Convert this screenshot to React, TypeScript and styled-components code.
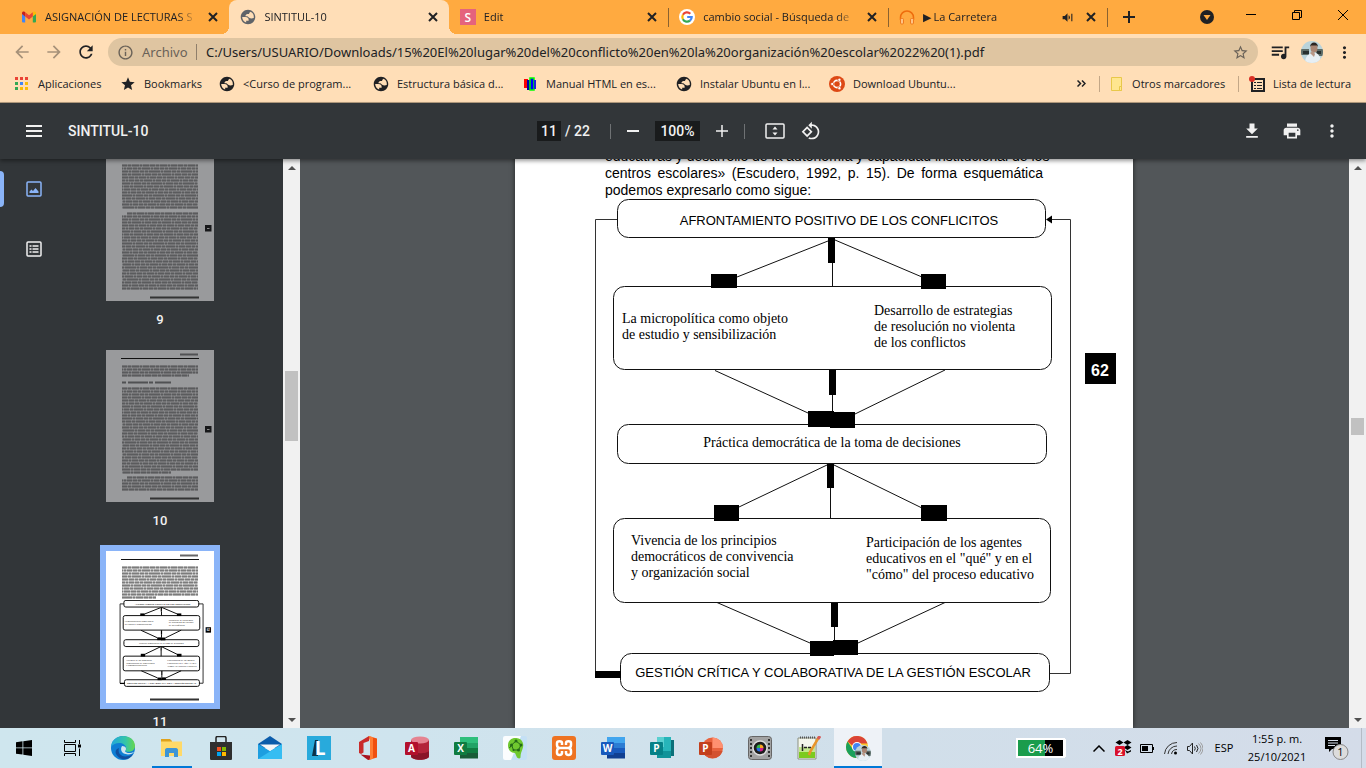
import React from 'react';
import styled, { createGlobalStyle, css } from 'styled-components';

const ui = '"Open Sans", "Noto Sans", sans-serif';
const sans = '"Liberation Sans", Arial, sans-serif';

const GlobalStyle = createGlobalStyle`
  *, *::before, *::after { box-sizing: border-box; }
  html, body, #root { height: 100%; }
  body { margin: 0; font-family: ${ui}; font-size: 11px; color: #202124; overflow: hidden; }
  button { border: 0; padding: 0; background: none; color: inherit; font: inherit; }
  input { border: 0; padding: 0; background: none; color: inherit; font: inherit; min-width: 0; }
  a { color: inherit; text-decoration: none; }
  svg { display: block; flex: none; }
`;

const Screen = styled.div`
  display: flex;
  flex-direction: column;
  height: 100vh;
`;

/* ---------- browser: tab strip ---------- */

const TitleBar = styled.header`
  display: flex;
  align-items: stretch;
  height: 34px;
  padding-left: 10px;
  background: #ffaa40;
`;

const TabStrip = styled.div`
  display: flex;
  flex: 0 1 1097px;
  min-width: 0;
`;

const Tab = styled.div<{ $active?: boolean; $divided?: boolean }>`
  position: relative;
  display: flex;
  flex: 1 1 0;
  align-items: center;
  gap: 8px;
  min-width: 0;
  padding: 0 8px 0 11px;
  ${(p) =>
    p.$divided &&
    css`
      &::after {
        content: '';
        position: absolute;
        right: -1px;
        top: 8px;
        height: 19px;
        width: 1px;
        background: #8a6230;
      }
    `}
  ${(p) =>
    p.$active &&
    css`
      background: #ffdeb7;
      border-radius: 8px 8px 0 0;
      &::before,
      &::after {
        content: '';
        position: absolute;
        bottom: 0;
        width: 8px;
        height: 8px;
      }
      &::before {
        left: -8px;
        background: radial-gradient(circle at 0 0, transparent 8px, #ffdeb7 8px);
      }
      &::after {
        right: -8px;
        background: radial-gradient(circle at 100% 0, transparent 8px, #ffdeb7 8px);
      }
    `}
`;

const TabTitle = styled.button`
  flex: 1;
  min-width: 0;
  overflow: hidden;
  white-space: nowrap;
  text-align: left;
  line-height: 16px;
  mask-image: linear-gradient(to right, #000 calc(100% - 20px), transparent);
`;

const SmallButton = styled.button`
  display: grid;
  place-items: center;
  flex: none;
  width: 16px;
  height: 16px;
`;

const NewTab = styled.button`
  display: grid;
  place-items: center;
  width: 28px;
  margin-left: 8px;
`;

const WindowControls = styled.div`
  display: flex;
  margin-left: auto;
`;

const SearchTabs = styled.button`
  display: grid;
  place-items: center;
  width: 42px;
`;

const WindowButton = styled.button`
  display: grid;
  place-items: center;
  width: 46px;
  height: 29px;
`;

const LetterIcon = styled.span`
  display: grid;
  place-items: center;
  flex: none;
  width: 16px;
  height: 16px;
  background: #e5637c;
  color: #fff;
  font: 600 12px ${ui};
`;

/* ---------- browser: toolbar and bookmarks ---------- */

const Toolbar = styled.div`
  display: flex;
  align-items: center;
  gap: 4px;
  height: 36px;
  padding: 0 8px;
  background: #ffdeb7;
`;

const ToolButton = styled.button<{ $dim?: boolean }>`
  display: grid;
  place-items: center;
  flex: none;
  width: 28px;
  height: 28px;
  color: ${(p) => (p.$dim ? '#a69179' : '#202124')};
`;

const AddressBar = styled.label`
  display: flex;
  flex: 1;
  align-items: center;
  min-width: 0;
  height: 28px;
  margin: 0 4px;
  padding: 0 9px;
  border-radius: 14px;
  background: #dfc5a1;
  color: #6a6258;
  font: 13px "Noto Sans", sans-serif;
`;

const Scheme = styled.span`
  width: 55px;
  margin-left: 8px;
  line-height: 16px;
  border-right: 1px solid #8f7f6b;
`;

const Address = styled.input`
  flex: 1;
  padding-left: 9px;
  color: #202124;
  outline: none;
`;

const BookmarkBar = styled.nav`
  display: flex;
  height: 33px;
  padding: 0 8px 5px 14px;
  background: #ffdeb7;
  border-bottom: 1px solid #b59d80;
`;

const Bookmark = styled.a<{ $width?: number }>`
  display: flex;
  align-items: center;
  gap: 8px;
  flex: none;
  width: ${(p) => (p.$width ? p.$width + 'px' : 'auto')};
  white-space: nowrap;
`;

const BookmarkEnd = styled.div`
  display: flex;
  align-items: center;
  margin-left: auto;
  padding-right: 7px;
`;

const More = styled.button`
  width: 12px;
  height: 28px;
`;

const BarRule = styled.i`
  width: 1px;
  height: 16px;
  margin: 0 10px;
  background: #c3a787;
`;

/* ---------- PDF viewer ---------- */

const PdfBar = styled.div`
  position: relative;
  z-index: 1;
  display: grid;
  grid-template-columns: 1fr 292px 1fr;
  align-items: center;
  flex: none;
  height: 56px;
  padding: 0 18px;
  background: #323639;
  color: #f1f1f1;
  font: 500 14px Roboto, sans-serif;
  box-shadow: 0 2px 4px rgba(0, 0, 0, 0.4);
`;

const BarGroup = styled.div<{ $gap: number; $end?: boolean }>`
  display: flex;
  align-items: center;
  justify-content: ${(p) => (p.$end ? 'flex-end' : 'flex-start')};
  gap: ${(p) => p.$gap}px;
`;

const ViewGroup = styled(BarGroup)`
  margin-left: 8px;
`;

const DocTitle = styled.h1`
  margin: 0;
  font: inherit;
`;

const PdfButton = styled.button`
  display: grid;
  place-items: center;
  flex: none;
  width: 32px;
  height: 32px;
`;

const PdfInput = styled.input<{ $width: number }>`
  flex: none;
  width: ${(p) => p.$width}px;
  height: 20px;
  background: #191b1c;
  text-align: center;
`;

const PageTotal = styled.span`
  flex: none;
  width: 39px;
  margin-left: -2px;
  white-space: nowrap;
`;

const PdfRule = styled.i`
  flex: none;
  width: 1px;
  height: 15px;
  background: #6f7274;
`;

const Workspace = styled.main`
  display: flex;
  flex: 1;
  min-height: 0;
`;

const Sidebar = styled.aside`
  display: flex;
  flex: 0 0 300px;
  background: #323639;
  color: #f1f1f1;
  overflow: hidden;
`;

const Rail = styled.div`
  flex: 0 0 68px;
`;

const RailButton = styled.button<{ $active?: boolean }>`
  position: relative;
  display: grid;
  place-items: center;
  width: 68px;
  height: 60px;
  color: ${(p) => (p.$active ? '#8ab4f8' : '#f1f1f1')};
  ${(p) =>
    p.$active &&
    css`
      &::before {
        content: '';
        position: absolute;
        left: 0;
        top: 12px;
        width: 4px;
        height: 36px;
        border-radius: 0 4px 4px 0;
        background: #8ab4f8;
      }
    `}
`;

const Thumbs = styled.ol`
  flex: 1;
  margin: -10px 0 0;
  padding: 0 0 0 38px;
  list-style: none;
`;

const Thumb = styled.li`
  width: 108px;
  font: 500 13px/20px Roboto, sans-serif;
  text-align: center;
`;

const Sheet = styled.div<{ $current?: boolean }>`
  display: grid;
  height: 152px;
  background: ${(p) => (p.$current ? '#fff' : '#999a9c')};
  box-shadow: ${(p) => (p.$current ? '0 0 0 6px #8ab4f8' : 'none')};
  & > svg {
    grid-area: 1 / 1;
  }
  & > svg + svg {
    margin-top: 49px;
  }
`;

const ThumbLabel = styled.div`
  padding: 9px 0 20px;
`;

const ScrollColumn = styled.div`
  display: flex;
  flex-direction: column;
  flex: 0 0 17px;
  background: #f1f1f1;
`;

const ScrollArrow = styled.button`
  display: grid;
  place-items: center;
  height: 17px;
  color: #505050;
`;

const ScrollTrack = styled.div<{ $offset: number }>`
  flex: 1;
  padding: ${(p) => p.$offset}px 2px 0;
`;

const ScrollThumb = styled.div<{ $length: number }>`
  height: ${(p) => p.$length}px;
  background: #c1c1c1;
`;

const Reader = styled.section`
  display: flex;
  flex: 1;
  justify-content: center;
  min-width: 0;
  padding-right: 1px;
  overflow: hidden;
  background: #525659;
`;

const Paper = styled.article`
  flex: 0 0 618px;
  margin-top: -11px;
  background: #fff;
  box-shadow: 0 0 5px rgba(0, 0, 0, 0.6);
`;

const BodyText = styled.p`
  width: 438px;
  margin: 0 0 0 90px;
  font: 14px/17px ${sans};
  color: #000;
`;

const BodyLine = styled.span<{ $full?: boolean }>`
  display: block;
  white-space: nowrap;
  text-align-last: ${(p) => (p.$full ? 'justify' : 'left')};
`;

/* ---------- taskbar ---------- */

const Taskbar = styled.footer`
  display: flex;
  flex: none;
  height: 40px;
  background: linear-gradient(to right, #cfe6ee 0%, #cfe4ee 30%, #d1dfea 65%, #d4dce9 100%);
  color: #000;
`;

const TaskApps = styled.div`
  display: flex;
  gap: 1px;
  margin-left: 3px;
`;

const TaskButton = styled.button<{ $state?: 'open' | 'focus' }>`
  display: grid;
  place-items: center;
  width: 48px;
  height: 40px;
  ${(p) =>
    p.$state === 'focus' &&
    css`
      background: #eef2f7;
      box-shadow: inset 0 -2px 0 #0078d7;
    `}
  ${(p) =>
    p.$state === 'open' &&
    css`
      background: linear-gradient(#0078d7, #0078d7) bottom / 40px 2px no-repeat;
    `}
`;

const Tray = styled.div`
  display: flex;
  align-items: center;
  margin-left: auto;
  padding-right: 4px;
`;

const TrayItem = styled.button<{ $width: number }>`
  display: grid;
  place-items: center;
  width: ${(p) => p.$width}px;
  height: 40px;
  line-height: 18px;
`;

const Charge = styled.div`
  display: grid;
  place-items: center;
  width: 49px;
  height: 20px;
  margin-right: 22px;
  border: 2px solid #fff;
  background: linear-gradient(to right, #1a9c4c 60%, #000 60%);
  box-shadow: 2px 0 0 -1px #fff;
  color: #fff;
  font-size: 13px;
  line-height: 16px;
`;

const ShowDesktop = styled.i`
  width: 1px;
  height: 40px;
  background: #b4bcc6;
`;

/* ---------- icons ---------- */

const Glyph = ({ d, size = 16, color = 'currentColor' }: { d: string; size?: number; color?: string }) => (
  <svg width={size} height={size} viewBox="0 0 24 24" fill={color} aria-hidden="true">
    <path d={d} />
  </svg>
);

const paths = {
  back: 'M20 11H7.83l5.59-5.59L12 4l-8 8 8 8 1.41-1.41L7.83 13H20v-2z',
  forward: 'M12 4l-1.41 1.41L16.17 11H4v2h12.17l-5.58 5.59L12 20l8-8z',
  reload:
    'M17.65 6.35C16.2 4.9 14.21 4 12 4c-4.42 0-7.99 3.58-7.99 8s3.57 8 7.99 8c3.73 0 6.84-2.55 7.73-6h-2.08c-.82 2.33-3.04 4-5.65 4-3.31 0-6-2.69-6-6s2.69-6 6-6c1.66 0 3.14.69 4.22 1.78L13 11h7V4l-2.35 2.35z',
  info: 'M11 17h2v-6h-2v6zm1-15C6.48 2 2 6.48 2 12s4.48 10 10 10 10-4.48 10-10S17.52 2 12 2zm0 18c-4.41 0-8-3.59-8-8s3.59-8 8-8 8 3.59 8 8-3.59 8-8 8zM11 9h2V7h-2v2z',
  starLine:
    'M22 9.24l-7.19-.62L12 2 9.19 8.63 2 9.24l5.46 4.73L5.82 21 12 17.27 18.18 21l-1.63-7.03L22 9.24zM12 15.4l-3.76 2.27 1-4.28-3.32-2.88 4.38-.38L12 6.1l1.71 4.04 4.38.38-3.32 2.88 1 4.28L12 15.4z',
  star: 'M12 17.27L18.18 21l-1.64-7.03L22 9.24l-7.19-.61L12 2 9.19 8.63 2 9.24l5.46 4.73L5.82 21z',
  music: 'M15 6H3v2h12V6zm0 4H3v2h12v-2zM3 16h8v-2H3v2zM17 6v8.180c-.31-.11-.65-.18-1-.18-1.660 0-3 1.340-3 3s1.340 3 3 3 3-1.340 3-3V8h3V6h-5z',
  dots: 'M12 8c1.100 0 2-.9 2-2s-.9-2-2-2-2 .9-2 2 .9 2 2 2zm0 2c-1.100 0-2 .9-2 2s.9 2 2 2 2-.9 2-2-.9-2-2-2zm0 6c-1.100 0-2 .9-2 2s.9 2 2 2 2-.9 2-2-.9-2-2-2z',
  download: 'M19 9h-4V3H9v6H5l7 7 7-7zM5 18v2h14v-2H5z',
  print:
    'M19 8H5c-1.660 0-3 1.340-3 3v6h4v4h12v-4h4v-6c0-1.660-1.340-3-3-3zm-3 11H8v-5h8v5zm3-7c-.55 0-1-.45-1-1s.45-1 1-1 1 .45 1 1-.45 1-1 1zm-1-9H6v4h12V3z',
  rotate:
    'M7.340 6.410L.86 12.900l6.490 6.480 6.490-6.480-6.500-6.490zM3.690 12.900l3.660-3.660L11 12.900l-3.660 3.660-3.650-3.660zm15.670-6.260C17.610 4.880 15.300 4 13 4V.76L8.760 5 13 9.240V6c1.790 0 3.580.68 4.950 2.050 2.730 2.730 2.730 7.170 0 9.900C16.580 19.320 14.790 20 13 20c-.97 0-1.940-.21-2.840-.61l-1.490 1.490C10.020 21.620 11.510 22 13 22c2.300 0 4.610-.88 6.360-2.640 3.520-3.510 3.520-9.210 0-12.720z',
  speaker:
    'M3 9v6h4l5 5V4L7 9H3zm13.500 3c0-1.770-1.020-3.290-2.500-4.030v8.050c1.480-.73 2.500-2.250 2.500-4.020zM19 5h2v14h-2z',
};

const GlobeIcon = ({ color = '#202124' }: { color?: string }) => (
  <svg width="16" height="16" viewBox="1 1 22 22" fill={color}>
    <path d="M12 2C6.480 2 2 6.480 2 12s4.480 10 10 10 10-4.480 10-10S17.520 2 12 2zM4 12h4.400c3.400 0 4.900 1.800 4.500 5H9.500v2.500C6.300 18.700 4 15.600 4 12zm15.900 1.400c-2.200.9-4.700.9-6.800-.6-.8-1.200-1.800-1.800-3.300-1.800H8.500c.2-1.700 1-2.800 2.800-3h2.200c0-1.500.7-2.500 2.100-3.200A8 8 0 0 1 20 12z" />
  </svg>
);

const CloseIcon = () => (
  <svg width="10" height="10" viewBox="0 0 10 10" stroke="#202124" strokeWidth="2">
    <path d="M1 1l8 8M9 1l-8 8" />
  </svg>
);

const GmailIcon = () => (
  <svg width="16" height="16" viewBox="0 0 16 16">
    <path d="M1 5v7.500a1 1 0 0 0 1 1h2.200V6z" fill="#4285f4" />
    <path d="M15 5v7.500a1 1 0 0 1-1 1h-2.200V6z" fill="#34a853" />
    <path d="M1 4.500V4c0-1.300 1.400-2 2.500-1.200l.7.500v4.200L1 5z" fill="#c5221f" />
    <path d="M15 4.500V4c0-1.300-1.400-2-2.500-1.200l-.7.500v4.200L15 5z" fill="#fbbc04" />
    <path d="M4.200 3.300L8 6.200l3.800-2.900v4.300L8 10.500 4.200 7.600z" fill="#ea4335" />
  </svg>
);

const GoogleIcon = () => (
  <svg width="16" height="16" viewBox="0 0 16 16">
    <circle cx="8" cy="8" r="8" fill="#fff" />
    <g fill="none" strokeWidth="2.200">
      <path d="M11.300 4.700A4.700 4.700 0 0 0 3.900 5.800" stroke="#ea4335" />
      <path d="M3.900 5.800a4.700 4.700 0 0 0 0 4.400" stroke="#fbbc05" />
      <path d="M3.900 10.200a4.700 4.700 0 0 0 7.100 1.400" stroke="#34a853" />
      <path d="M11 11.600A4.700 4.700 0 0 0 12.700 8H8.200" stroke="#4285f4" />
    </g>
  </svg>
);

const HeadphonesIcon = () => (
  <svg width="16" height="16" viewBox="0 0 16 16" fill="none">
    <path d="M1.500 11V8.500a6.500 6.500 0 0 1 13 0V11" stroke="#ee6c0c" strokeWidth="1.500" />
    <rect x="1.500" y="9.500" width="3" height="5.500" rx="1" fill="#ffc285" stroke="#ee7a1c" />
    <rect x="11.500" y="9.500" width="3" height="5.500" rx="1" fill="#ffc285" stroke="#ee7a1c" />
  </svg>
);

const AppsIcon = () => {
  const colors = ['#ea4335', '#ea4335', '#ea4335', '#34a853', '#4285f4', '#fbbc05', '#34a853', '#fbbc05', '#fbbc05'];
  return (
    <svg width="16" height="16" viewBox="0 0 16 16">
      {colors.map((c, i) => (
        <rect key={i} x={1 + (i % 3) * 5} y={1 + Math.floor(i / 3) * 5} width="3" height="3" fill={c} />
      ))}
    </svg>
  );
};

const BarsIcon = () => (
  <svg width="16" height="16" viewBox="0 0 16 16">
    <rect x="2" y="3" width="4" height="9" fill="#f00" />
    <rect x="5" y="4" width="4" height="10" fill="#00a" />
    <rect x="8" y="2" width="4" height="12" fill="#00f" stroke="#0f0" strokeWidth="1.500" />
    <rect x="12" y="4" width="2" height="9" fill="#22d" />
  </svg>
);

const UbuntuIcon = () => (
  <svg width="16" height="16" viewBox="0 0 16 16">
    <circle cx="8" cy="8" r="8" fill="#dd4814" />
    <circle cx="8" cy="8" r="3.600" fill="none" stroke="#fff" strokeWidth="1.600" />
    <g fill="#fff" stroke="#dd4814" strokeWidth=".7">
      <circle cx="3.200" cy="8" r="1.600" />
      <circle cx="10.400" cy="3.800" r="1.600" />
      <circle cx="10.400" cy="12.200" r="1.600" />
    </g>
  </svg>
);

const FolderIcon = () => (
  <svg width="14" height="16" viewBox="0 0 14 16" fill="#ffe68f" stroke="#e8c84a">
    <path d="M1.500 1.500h10v13h-10z" />
    <path d="M9.500 10.500h2v4h-2z" />
  </svg>
);

const ReadingListIcon = () => (
  <svg width="16" height="16" viewBox="0 0 16 16" fill="none" stroke="#202124">
    <rect x="3" y="3" width="12" height="12" strokeWidth="2" />
    <path d="M5 6.500h2M8 6.500h5M5 9.500h2M8 9.500h5M5 12.500h2M8 12.500h5" />
    <circle cx="3" cy="3" r="3" fill="#d93025" stroke="none" />
  </svg>
);

const Avatar = ({ size = 22 }: { size?: number }) => (
  <svg width={size} height={size} viewBox="0 0 22 22">
    <clipPath id="face">
      <circle cx="11" cy="11" r="11" />
    </clipPath>
    <g clipPath="url(#face)">
      <path fill="#b9d3da" d="M0 0h22v22H0z" />
      <path fill="#5e6c67" d="M0 8h8v6H0zM15 8h7v7h-7z" />
      <path fill="#28302f" d="M2 10h6v3H2zM16 10h4v3h-4z" />
      <path fill="#e7eff4" d="M4 22c0-6 3-9 7-10h4c4 2 5 6 5 10z" />
      <ellipse cx="13" cy="7" rx="3.500" ry="4.500" fill="#a98573" />
      <path fill="#2b2522" d="M9 6c0-6 8-6 8 0l-1-1.500h-6z" />
      <path fill="#b89786" d="M9 12l3-2 2 3-1 3z" />
    </g>
  </svg>
);

const ImageIcon = () => (
  <svg width="16" height="16" viewBox="0 0 16 16">
    <rect x="1" y="1" width="14" height="14" rx="1" fill="none" stroke="currentColor" strokeWidth="1.500" />
    <path d="M3.500 12V10.500l2-2 1.500 1.500 2.500-3 3 3.500V12z" fill="currentColor" />
  </svg>
);

const OutlineIcon = () => (
  <svg width="16" height="16" viewBox="0 0 16 16" fill="none" stroke="currentColor" strokeWidth="1.500">
    <rect x="1" y="1" width="14" height="14" rx="1" />
    <path d="M3.500 5h2M6.500 5h6M3.500 8h2M6.500 8h6M3.500 11h2M6.500 11h6" />
  </svg>
);

const FitIcon = () => (
  <svg width="20" height="16" viewBox="0 0 20 16" fill="none" stroke="currentColor" strokeWidth="1.500">
    <rect x="1" y="1" width="18" height="14" rx="1" />
    <path d="M10 3.500l2.500 3h-5zM10 12.500l2.500-3h-5z" fill="currentColor" stroke="none" />
  </svg>
);

/* ---------- taskbar icons ---------- */

const Art = ({ children }: { children: React.ReactNode }) => (
  <svg width="24" height="24" viewBox="0 0 24 24">
    {children}
  </svg>
);

const Letter = ({ x, y, size = 10, children }: { x: number; y: number; size?: number; children: string }) => (
  <text x={x} y={y} fontSize={size} fontWeight="700" fill="#fff" textAnchor="middle" fontFamily="Open Sans, sans-serif">
    {children}
  </text>
);

const OfficeBook = ({ letter, tones, badge }: { letter: string; tones: string[]; badge: string }) => (
  <Art>
    <path d="M6 1h18v6H6z" fill={tones[0]} />
    <path d="M6 7h18v5H6z" fill={tones[1]} />
    <path d="M6 12h18v5H6z" fill={tones[2]} />
    <path d="M6 17h18v5.500H6z" fill={tones[3]} />
    <rect x="0" y="6" width="13" height="13" rx="1" fill={badge} />
    <Letter x={6.5} y={16}>{letter}</Letter>
  </Art>
);

const StartIcon = () => (
  <svg width="16" height="16" viewBox="0 0 16 16">
    <path d="M0 2.200l6.500-.9v6.200H0zM7.300 1.200L16 0v7.500H7.300zM0 8.300h6.500v6.300L0 13.700zM7.300 8.300H16V16l-8.700-1.200z" />
  </svg>
);

const TaskViewIcon = () => (
  <svg width="17" height="16" viewBox="0 0 17 16" fill="none" stroke="#000">
    <path d="M.5 0v2.500h11V0M.5 16v-2.500h11V16M.5 4.500h11v7H.5zM15.500 0v4M15.500 8.500V16" />
    <path d="M14 4.500h3v3h-3z" fill="#000" stroke="none" />
  </svg>
);

const EdgeIcon = () => (
  <Art>
    <defs>
      <linearGradient id="edgeTop" x1="0" x2="1">
        <stop offset="0" stopColor="#22a7dc" />
        <stop offset=".6" stopColor="#34c5a8" />
        <stop offset="1" stopColor="#67d84c" />
      </linearGradient>
    </defs>
    <circle cx="12" cy="12" r="12" fill="#0f7fd4" />
    <path d="M0 11C1-4 24-3 24 10c0 5-5 6.500-9 5.500-1.500-.5 0-1 .2-3C15 6 4 5 0 11z" fill="url(#edgeTop)" />
    <path d="M8 12c-2 6 4 12 14 6-4 7-13 7-17 0-1-3 0-5 3-6z" fill="#124f9e" />
    <path d="M11 10c-2 3-1 8 6 8.500 3 0 5-1 6-2.500-2 1-8 2-9-1 2-2 1-5-3-5z" fill="#cfe5ee" />
  </Art>
);

const FilesIcon = () => (
  <svg width="22" height="20" viewBox="0 0 22 20">
    <path d="M0 1h9l2 2v5H0z" fill="#e0a21b" />
    <path d="M0 3.500h21V18H0z" fill="#ffd968" />
    <path d="M4 19v-7c0-1 .8-2 2-2h9c1.200 0 2 1 2 2v7h-4v-4H8v4z" fill="#3d95d6" />
  </svg>
);

const StoreIcon = () => (
  <Art>
    <path d="M7 7V2c0-1 .5-1.500 1.500-1.500h7C16.500.5 17 1 17 2v5" fill="none" stroke="#222" strokeWidth="1.500" />
    <path d="M1 6h22v16.500c0 1-.5 1.500-1.500 1.500h-19C1.500 24 1 23.500 1 22.500z" fill="#2f2f2f" />
    <path d="M8 11h4v4H8z" fill="#f25022" />
    <path d="M13 11h4v4h-4z" fill="#7fba00" />
    <path d="M8 16h4v4H8z" fill="#00a4ef" />
    <path d="M13 16h4v4h-4z" fill="#ffb900" />
  </Art>
);

const MailIcon = () => (
  <Art>
    <path d="M0 8L12 0l12 8v4H0z" fill="#0b5cab" />
    <path d="M0 8l12 7 12-7v15H0z" fill="#1d9ee0" />
    <path d="M0 23h24V8z" fill="#36bdf2" />
    <path d="M2 8.500h20L12 15z" fill="#f4f6f8" />
  </Art>
);

const LogoLIcon = () => (
  <Art>
    <path d="M0 0h24v24H0z" fill="#28aadc" />
    <path d="M5 20L8 4h3v16z" fill="#0b3348" />
    <Letter x={13} y={18.5} size={19}>L</Letter>
  </Art>
);

const OfficeIcon = () => (
  <Art>
    <path d="M3 6l10-6v5L7.500 7v9.500L5 18l-2-1z" fill="#c92b2b" />
    <path d="M12.500 0L21 2.500v19L12.500 24l1.500-2V4.500z" fill="#f0500f" />
    <path d="M4.500 18.500L14 19.500v4.200l-2 .3z" fill="#a8121f" />
    <path d="M13 0l4 1.200v21.500L13 24l1-2V4z" fill="#ff7d33" />
  </Art>
);

const AccessIcon = () => (
  <Art>
    <path d="M6 4v16c0 5 18 5 18 0V4z" fill="#b3243a" />
    <path d="M6 15v5c0 5 18 5 18 0v-5c-2 3-15 3-18 0z" fill="#8a1428" />
    <ellipse cx="15" cy="4" rx="9" ry="3.500" fill="#e58391" />
    <rect x="0" y="6" width="13" height="13" rx="1" fill="#b3102c" />
    <Letter x={6.5} y={16}>A</Letter>
  </Art>
);

const BrainIcon = () => (
  <Art>
    <rect width="24" height="24" rx="2" fill="#c4e0f5" />
    <path d="M0 2a2 2 0 0 1 2-2h16L8 24H2a2 2 0 0 1-2-2z" fill="#fbfdfe" />
    <path d="M5 9.500C5 4 9 1.500 13.500 2c6 .7 8 6 6 11-1 2.500-2 5-2 8 0 2-2 1.500-3.500.5L12 17c-4 0-7-3-7-7.500z" fill="#6fc92f" />
    <path d="M8.500 9l4.500-4 5 4-2.500 5h-5zM8.500 9l-2 3" fill="none" stroke="#246a18" />
    <g fill="#246a18">
      <circle cx="8.500" cy="9" r="1.500" />
      <circle cx="13" cy="5" r="1.500" />
      <circle cx="18" cy="9" r="1.500" />
      <circle cx="15.500" cy="14" r="1.500" />
      <circle cx="10.500" cy="14" r="1" />
    </g>
  </Art>
);

const XamppIcon = () => (
  <Art>
    <rect width="24" height="24" rx="3" fill="#ee7322" />
    <path
      d="M10 9V7c0-2.500-5-2.500-5 0v2c0 2 1.500 3 3 3-1.500 0-3 1-3 3v2c0 2.500 5 2.500 5 0v-2M14 9V7c0-2.500 5-2.500 5 0v2c0 2-1.500 3-3 3 1.500 0 3 1 3 3v2c0 2.500-5 2.500-5 0v-2M8 12h8"
      fill="none"
      stroke="#fff"
      strokeWidth="2.500"
    />
  </Art>
);

const PublisherIcon = () => (
  <Art>
    <path d="M14 4h10v16H14z" fill="#0b7079" />
    <path d="M7 1h14v21H7z" fill="#27b5b9" />
    <path d="M7 1h7v10H7z" fill="#5ad0d0" />
    <path d="M7 15h14v7H7z" fill="#119399" />
    <rect x="0" y="6" width="13" height="13" rx="1" fill="#068187" />
    <Letter x={6.5} y={16}>P</Letter>
  </Art>
);

const PowerPointIcon = () => (
  <Art>
    <circle cx="13.500" cy="12" r="10.500" fill="#e8623d" />
    <path d="M13.500 1.500A10.500 10.500 0 0 1 24 12H13.500z" fill="#ff9070" />
    <path d="M3.500 15h20a10.500 10.500 0 0 1-20 0z" fill="#d35230" />
    <rect x="0" y="6" width="13" height="13" rx="1" fill="#c33f1c" />
    <Letter x={6.5} y={16}>P</Letter>
  </Art>
);

const CameraIcon = () => (
  <Art>
    <rect x=".5" y=".5" width="23" height="23" rx="3" fill="#a2a2a2" stroke="#666" />
    <path d="M3 3v18M21 3v18" stroke="#333" strokeWidth="2" strokeDasharray="2 2" />
    <circle cx="12" cy="12" r="7" fill="#1d1d1d" stroke="#ddd" strokeWidth="1.500" />
    <path d="M12 12V8.500a3.500 3.500 0 0 1 3.500 3.500z" fill="#f5a623" />
    <path d="M12 12h3.500a3.500 3.500 0 0 1-3.500 3.500z" fill="#d0208c" />
    <path d="M12 12v3.500a3.500 3.500 0 0 1-3.500-3.500z" fill="#2a6be0" />
    <path d="M12 12H8.500A3.500 3.500 0 0 1 12 8.500z" fill="#35b34a" />
  </Art>
);

const NotesIcon = () => (
  <Art>
    <path d="M1 2h18v21H1z" fill="#f4f6ec" stroke="#8c9180" />
    <path d="M2 14h16v8H2z" fill="#7ccb1f" />
    <path d="M2 11h16v5H2z" fill="#c3e88e" />
    <path d="M3 1.500h15" stroke="#555" strokeWidth="2" strokeDasharray="1 1" />
    <path d="M5.500 8v7M7 11.500h3M11 11.500h3" stroke="#222" strokeWidth="1.500" />
    <path d="M22 1l-9 15-1 3" stroke="#e8952b" strokeWidth="2.500" fill="none" />
    <path d="M23 0l-2 3" stroke="#d65a5a" strokeWidth="3" />
  </Art>
);

const ChromeIcon = () => (
  <svg width="26" height="26" viewBox="0 0 26 26">
    <circle cx="12" cy="12" r="11" fill="#fbc72b" />
    <path d="M2.500 6.500A11 11 0 0 1 22.500 8.500H12a4 4 0 0 0-4 2.500z" fill="#db4437" />
    <path d="M2.500 6.500A11 11 0 0 0 11 23l4-7-7-1.500z" fill="#1aa05c" />
    <circle cx="12" cy="12" r="5" fill="#fff" />
    <circle cx="12" cy="12" r="4" fill="#4285f4" />
    <svg x="10" y="10" width="16" height="16">
      <Avatar size={16} />
    </svg>
  </svg>
);

/* ---------- the flow chart on page 62 ---------- */

const bars = [
  [313, 39, 7, 25], [196, 75, 26, 14], [406, 75, 25, 15],
  [314, 171, 7, 25], [293, 212, 26, 16], [315, 213, 25, 16],
  [312, 265, 7, 24], [199, 306, 25, 16], [406, 306, 26, 16],
  [316, 404, 7, 24], [295, 442, 24, 15], [318, 441, 25, 15],
  [80, 472, 26, 7],
];

const nodes = [
  [102.5, 0.5, 428, 38],
  [98.5, 87.5, 438, 83],
  [102.5, 225.5, 429, 39],
  [98.5, 319.5, 437, 84],
  [105.5, 454.5, 429, 38],
];

const captions: { x: number; y: number; center?: boolean; plain?: boolean; lines: string[] }[] = [
  { x: 324, y: 26, center: true, plain: true, lines: ['AFRONTAMIENTO POSITIVO DE LOS CONFLICITOS'] },
  { x: 107, y: 124, lines: ['La micropolítica como objeto', 'de estudio y sensibilización'] },
  { x: 359, y: 116, lines: ['Desarrollo de estrategias', 'de resolución no violenta', 'de los conflictos'] },
  { x: 317, y: 248, center: true, lines: ['Práctica democrática de la toma de decisiones'] },
  { x: 116, y: 346, lines: ['Vivencia de los principios', 'democráticos de convivencia', 'y organización social'] },
  { x: 351, y: 348, lines: ['Participación de los agentes', 'educativos en el "qué" y en el', '"cómo" del proceso educativo'] },
  { x: 318, y: 478, center: true, plain: true, lines: ['GESTIÓN CRÍTICA Y COLABORATIVA DE LA GESTIÓN ESCOLAR'] },
];

const FlowChart = ({ width, height }: { width: number; height: number }) => (
  <svg width={width} height={height} viewBox="0 0 618 500" role="img" aria-label="Afrontamiento positivo de los conflictos">
    <g fill="none" stroke="#111">
      <path
        vectorEffect="non-scaling-stroke"
        d="M313 42L222 78M320 41L407 78M317.500 64v24M200 171.500L293 214M430 171L340 215M317.500 195v18M312 266L224 308M319 266L407 309M315.500 289v31M202 403.500L295 444M430 403.500L343 444M319.500 428v14"
      />
      <path vectorEffect="non-scaling-stroke" stroke="#333" d="M102 20.500H80.500V474M536 20.500H555.500V474.500H534" />
      {nodes.map(([x, top, w, h]) => (
        <rect key={top} x={x} y={top} width={w} height={h} rx="11" vectorEffect="non-scaling-stroke" />
      ))}
    </g>
    <path d="M531 20.500l6-4v8z" />
    {bars.map(([x, top, w, h]) => (
      <rect key={`${x}-${top}`} x={x} y={top} width={w} height={h} />
    ))}
    {captions.map((c) => (
      <text
        key={c.lines[0]}
        textAnchor={c.center ? 'middle' : 'start'}
        fontFamily={c.plain ? 'Liberation Sans, sans-serif' : 'Liberation Serif, serif'}
        fontSize={c.plain ? 13 : 14}
      >
        {c.lines.map((line, i) => (
          <tspan key={line} x={c.x} y={c.y + i * 16}>
            {line}
          </tspan>
        ))}
      </text>
    ))}
    <rect x="570" y="154" width="31" height="31" />
    <text x="585" y="177" fill="#fff" textAnchor="middle" fontFamily="Liberation Sans, sans-serif" fontWeight="700" fontSize="16">
      62
    </text>
  </svg>
);

/* ---------- page previews ---------- */

type Block = { from: number; rows: number; indent?: boolean; last?: number };

const dashes = ['5 1 3 1 7 1 2 1 6 1', '3 1 8 1 2 1 5 1 4 1', '7 1 4 1 3 1 11 1 2 1', '2 1 6 1 5 1 3 1 9 1'];

const Preview = ({ blocks, header, heading, ink, marker }: { blocks: Block[]; header?: boolean; heading?: number; ink: string; marker?: boolean }) => (
  <svg width="108" height="152" viewBox="0 0 108 152">
    {header && <path d="M74 4.500h18" stroke={ink} strokeWidth="2" />}
    {header && <path d="M15 8.500h78" stroke="#111" />}
    {heading && <path d={`M16 ${heading}h49`} stroke={ink} strokeWidth="2" strokeDasharray="4 2 20 1" />}
    {blocks.map((b) =>
      Array.from({ length: b.rows }, (_, i) => {
        const start = i === 0 && b.indent ? 21 : 16;
        const end = i === b.rows - 1 ? b.last || 92 : 92;
        const y = b.from + i * 3;
        return (
          <g key={y} stroke={ink}>
            <path d={`M${start} ${y}H${end}`} strokeWidth="2" opacity=".5" />
            <path
              d={`M${start} ${y}H${end}`}
              strokeWidth="2"
              strokeDasharray={dashes[i % 4]}
              strokeDashoffset={(i * 11) % 23}
              opacity=".7"
            />
          </g>
        );
      }),
    )}
    <path d="M44 148.500h49" stroke="#333" strokeWidth="2" />
    {marker && (
      <>
        <path d="M99 76h6.500v6.500H99z" fill="#17181a" />
        <path d="M101 79.500h2.500" stroke="#888" />
      </>
    )}
  </svg>
);

const ScrollBar = ({ offset, length }: { offset: number; length: number }) => (
  <ScrollColumn>
    <ScrollArrow aria-label="Subir">
      <svg width="8" height="4" viewBox="0 0 8 4"><path d="M0 4l4-4 4 4z" fill="currentColor" /></svg>
    </ScrollArrow>
    <ScrollTrack $offset={offset}>
      <ScrollThumb $length={length} />
    </ScrollTrack>
    <ScrollArrow aria-label="Bajar">
      <svg width="8" height="4" viewBox="0 0 8 4"><path d="M0 0h8L4 4z" fill="currentColor" /></svg>
    </ScrollArrow>
  </ScrollColumn>
);

const tabs = [
  { title: 'ASIGNACIÓN DE LECTURAS S', icon: <GmailIcon /> },
  { title: 'SINTITUL-10', icon: <GlobeIcon color="#5f6368" />, active: true },
  { title: 'Edit', icon: <LetterIcon>S</LetterIcon>, divided: true },
  { title: 'cambio social - Búsqueda de', icon: <GoogleIcon />, divided: true },
  { title: '▶ La Carretera', icon: <HeadphonesIcon />, divided: true, audio: true },
];

const bookmarks = [
  { label: 'Aplicaciones', width: 106, icon: <AppsIcon /> },
  { label: 'Bookmarks', width: 99, icon: <Glyph d={paths.star} /> },
  { label: '<Curso de program...', width: 154, icon: <GlobeIcon /> },
  { label: 'Estructura básica d...', width: 149, icon: <GlobeIcon /> },
  { label: 'Manual HTML en es...', width: 154, icon: <BarsIcon /> },
  { label: 'Instalar Ubuntu en l...', width: 153, icon: <GlobeIcon /> },
  { label: 'Download Ubuntu...', width: 140, icon: <UbuntuIcon /> },
];

const apps: { name: string; icon: React.ReactNode; state?: 'open' | 'focus' }[] = [
  { name: 'Edge', icon: <EdgeIcon /> },
  { name: 'Explorador de archivos', icon: <FilesIcon />, state: 'open' },
  { name: 'Microsoft Store', icon: <StoreIcon /> },
  { name: 'Correo', icon: <MailIcon /> },
  { name: 'Lenovo', icon: <LogoLIcon /> },
  { name: 'Office', icon: <OfficeIcon /> },
  { name: 'Access', icon: <AccessIcon /> },
  { name: 'Excel', icon: <OfficeBook letter="X" tones={['#2fbf7c', '#21a366', '#107c41', '#185c37']} badge="#107c41" /> },
  { name: 'Mapas', icon: <BrainIcon /> },
  { name: 'XAMPP', icon: <XamppIcon /> },
  { name: 'Word', icon: <OfficeBook letter="W" tones={['#41a5ee', '#2b7cd3', '#185abd', '#103f91']} badge="#185abd" /> },
  { name: 'Publisher', icon: <PublisherIcon /> },
  { name: 'PowerPoint', icon: <PowerPointIcon /> },
  { name: 'Cámara', icon: <CameraIcon /> },
  { name: 'Notepad++', icon: <NotesIcon /> },
  { name: 'Chrome', icon: <ChromeIcon />, state: 'focus' },
];

export default function App() {
  return (
    <Screen>
      <GlobalStyle />
      <TitleBar>
        <TabStrip>
          {tabs.map((t) => (
            <Tab key={t.title} $active={t.active} $divided={t.divided}>
              {t.icon}
              <TabTitle>{t.title}</TabTitle>
              {t.audio && (
                <SmallButton aria-label="Silenciar">
                  <Glyph d={paths.speaker} size={13} />
                </SmallButton>
              )}
              <SmallButton aria-label="Cerrar pestaña">
                <CloseIcon />
              </SmallButton>
            </Tab>
          ))}
        </TabStrip>
        <NewTab aria-label="Nueva pestaña">
          <svg width="12" height="12" viewBox="0 0 12 12" stroke="#202124" strokeWidth="2"><path d="M6 0v12M0 6h12" /></svg>
        </NewTab>
        <WindowControls>
          <SearchTabs aria-label="Buscar pestañas">
            <svg width="14" height="14" viewBox="0 0 14 14"><circle cx="7" cy="7" r="7" fill="#202124" /><path d="M3.500 5h7L7 10z" fill="#ffaa40" /></svg>
          </SearchTabs>
          <WindowButton aria-label="Minimizar">
            <svg width="10" height="10" viewBox="0 0 10 10" stroke="#000"><path d="M0 4.500h10" /></svg>
          </WindowButton>
          <WindowButton aria-label="Restaurar">
            <svg width="10" height="10" viewBox="0 0 10 10" fill="none" stroke="#000"><path d="M.5 2.500h7v7h-7zM2.500 2.500v-2h7v7h-2" /></svg>
          </WindowButton>
          <WindowButton aria-label="Cerrar">
            <svg width="10" height="10" viewBox="0 0 10 10" stroke="#000"><path d="M0 0l10 10M10 0L0 10" /></svg>
          </WindowButton>
        </WindowControls>
      </TitleBar>

      <Toolbar>
        <ToolButton $dim aria-label="Atrás"><Glyph d={paths.back} size={20} /></ToolButton>
        <ToolButton $dim aria-label="Adelante"><Glyph d={paths.forward} size={20} /></ToolButton>
        <ToolButton aria-label="Recargar"><Glyph d={paths.reload} size={20} /></ToolButton>
        <AddressBar>
          <Glyph d={paths.info} size={17} />
          <Scheme>Archivo</Scheme>
          <Address
            aria-label="Dirección"
            defaultValue="C:/Users/USUARIO/Downloads/15%20El%20lugar%20del%20conflicto%20en%20la%20organización%20escolar%2022%20(1).pdf"
          />
          <Glyph d={paths.starLine} size={17} />
        </AddressBar>
        <ToolButton aria-label="Control multimedia"><Glyph d={paths.music} size={22} /></ToolButton>
        <ToolButton aria-label="Perfil"><Avatar /></ToolButton>
        <ToolButton aria-label="Menú"><Glyph d={paths.dots} size={19} /></ToolButton>
      </Toolbar>

      <BookmarkBar>
        {bookmarks.map((b) => (
          <Bookmark key={b.label} href="#" $width={b.width}>
            {b.icon}
            {b.label}
          </Bookmark>
        ))}
        <BookmarkEnd>
          <More aria-label="Más marcadores">
            <svg width="9" height="7" viewBox="0 0 9 7" fill="none" stroke="#202124" strokeWidth="1.500"><path d="M.5.500l3 3-3 3M5 .5l3 3-3 3" /></svg>
          </More>
          <BarRule />
          <Bookmark href="#" $width={118}><FolderIcon />Otros marcadores</Bookmark>
          <BarRule />
          <Bookmark href="#"><ReadingListIcon />Lista de lectura</Bookmark>
        </BookmarkEnd>
      </BookmarkBar>

      <PdfBar>
        <BarGroup $gap={18}>
          <PdfButton aria-label="Menú">
            <svg width="16" height="12" viewBox="0 0 16 12" stroke="currentColor" strokeWidth="2"><path d="M0 1h16M0 6h16M0 11h16" /></svg>
          </PdfButton>
          <DocTitle>SINTITUL-10</DocTitle>
        </BarGroup>
        <BarGroup $gap={6}>
          <PdfInput $width={24} aria-label="Página" defaultValue="11" />
          <PageTotal>/ 22</PageTotal>
          <PdfRule />
          <PdfButton aria-label="Alejar">
            <svg width="12" height="2" viewBox="0 0 12 2"><path d="M0 0h12v2H0z" fill="currentColor" /></svg>
          </PdfButton>
          <PdfInput $width={45} aria-label="Zoom" defaultValue="100%" />
          <PdfButton aria-label="Acercar">
            <svg width="12" height="12" viewBox="0 0 12 12" stroke="currentColor" strokeWidth="1.500"><path d="M6 0v12M0 6h12" /></svg>
          </PdfButton>
          <PdfRule />
          <ViewGroup $gap={4}>
            <PdfButton aria-label="Ajustar a la página"><FitIcon /></PdfButton>
            <PdfButton aria-label="Girar"><Glyph d={paths.rotate} size={20} /></PdfButton>
          </ViewGroup>
        </BarGroup>
        <BarGroup $gap={8} $end>
          <PdfButton aria-label="Descargar"><Glyph d={paths.download} size={20} /></PdfButton>
          <PdfButton aria-label="Imprimir"><Glyph d={paths.print} size={20} /></PdfButton>
          <PdfButton aria-label="Más"><Glyph d={paths.dots} size={20} /></PdfButton>
        </BarGroup>
      </PdfBar>

      <Workspace>
        <Sidebar>
          <Rail>
            <RailButton $active aria-label="Miniaturas"><ImageIcon /></RailButton>
            <RailButton aria-label="Esquema"><OutlineIcon /></RailButton>
          </Rail>
          <Thumbs>
            <Thumb>
              <Sheet>
                <Preview ink="#505153" marker blocks={[{ from: 16.5, rows: 15 }, { from: 64.5, rows: 26, indent: true }]} />
              </Sheet>
              <ThumbLabel>9</ThumbLabel>
            </Thumb>
            <Thumb>
              <Sheet>
                <Preview
                  ink="#505153"
                  marker
                  header
                  heading={32.5}
                  blocks={[{ from: 16.5, rows: 4, last: 83 }, { from: 38.5, rows: 29, last: 65 }, { from: 127.5, rows: 5, indent: true }]}
                />
              </Sheet>
              <ThumbLabel>10</ThumbLabel>
            </Thumb>
            <Thumb>
              <Sheet $current>
                <Preview ink="#666" header blocks={[{ from: 16.5, rows: 11, last: 50 }]} />
                <FlowChart width={108} height={88} />
              </Sheet>
              <ThumbLabel>11</ThumbLabel>
            </Thumb>
          </Thumbs>
          <ScrollBar offset={195} length={70} />
        </Sidebar>
        <Reader>
          <Paper>
            <BodyText>
              <BodyLine $full>educativas y desarrollo de la autonomía y capacidad institucional de los</BodyLine>
              <BodyLine $full>centros escolares» (Escudero, 1992, p. 15). De forma esquemática</BodyLine>
              <BodyLine>podemos expresarlo como sigue:</BodyLine>
            </BodyText>
            <FlowChart width={618} height={500} />
          </Paper>
        </Reader>
        <ScrollBar offset={242} length={17} />
      </Workspace>

      <Taskbar>
        <TaskButton aria-label="Inicio"><StartIcon /></TaskButton>
        <TaskButton aria-label="Vista de tareas"><TaskViewIcon /></TaskButton>
        <TaskApps>
          {apps.map((a) => (
            <TaskButton key={a.name} aria-label={a.name} $state={a.state}>
              {a.icon}
            </TaskButton>
          ))}
        </TaskApps>
        <Tray>
          <Charge>64%</Charge>
          <TrayItem $width={24} aria-label="Iconos ocultos">
            <svg width="12" height="7" viewBox="0 0 12 7" fill="none" stroke="#000" strokeWidth="1.500"><path d="M.5 6.500L6 1l5.500 5.500" /></svg>
          </TrayItem>
          <TrayItem $width={24} aria-label="Dropbox">
            <svg width="17" height="16" viewBox="0 0 17 16">
              <path d="M4.500 0L8.500 2.500 4.500 5 .5 2.500zM12.500 0l4 2.500-4 2.500-4-2.500zM12.500 5l4 2.500-4 2.500-4-2.500zM10 10l3 1.500 3-1.500v1.500l-4 2z" />
              <rect x="0" y="6" width="10" height="10" rx="1.500" fill="#d9102a" />
              <Letter x={5} y={14.5} size={9}>2</Letter>
            </svg>
          </TrayItem>
          <TrayItem $width={24} aria-label="Batería">
            <svg width="15" height="9" viewBox="0 0 15 9" fill="none" stroke="#000"><path d="M.5.500h12v8H.500zM13.500 3v3" /><path d="M2 2h6v5H2z" fill="#000" stroke="none" /></svg>
          </TrayItem>
          <TrayItem $width={24} aria-label="Wi-Fi">
            <svg width="14" height="14" viewBox="0 0 14 14" fill="none" stroke="#333">
              <path d="M.5 13A12.500 12.500 0 0 1 13 1.500M4 13a9 9 0 0 1 9-8M7.500 13A5.500 5.500 0 0 1 13 8.500" />
              <circle cx="11.500" cy="12" r="1.500" fill="#000" stroke="none" />
            </svg>
          </TrayItem>
          <TrayItem $width={24} aria-label="Volumen">
            <svg width="16" height="13" viewBox="0 0 16 13" fill="none" stroke="#222">
              <path d="M.5 4.500h2l3-3.500v11l-3-3.500h-2zM7.500 4.500q1.500 2 0 4M9.500 3q3 3.500 0 7" />
              <path d="M11.500 1.500q5 5 0 10M13.500.500q5 6 0 12" stroke="#999" />
            </svg>
          </TrayItem>
          <TrayItem $width={34}>ESP</TrayItem>
          <TrayItem $width={72}>
            <span>1:55 p. m.<br />25/10/2021</span>
          </TrayItem>
          <TrayItem $width={48} aria-label="Notificaciones">
            <svg width="24" height="24" viewBox="0 0 24 24">
              <path d="M0 1h16v12H7l-3 3v-3H0z" />
              <path d="M3 4.500h10M3 7h10M3 9.500h7" stroke="#d4dce9" />
              <circle cx="15.500" cy="16" r="7.500" fill="#dcdcdc" stroke="#888" />
              <text x="15.500" y="20" fontSize="11" textAnchor="middle" fontFamily="Open Sans, sans-serif">1</text>
            </svg>
          </TrayItem>
          <ShowDesktop />
        </Tray>
      </Taskbar>
    </Screen>
  );
}
